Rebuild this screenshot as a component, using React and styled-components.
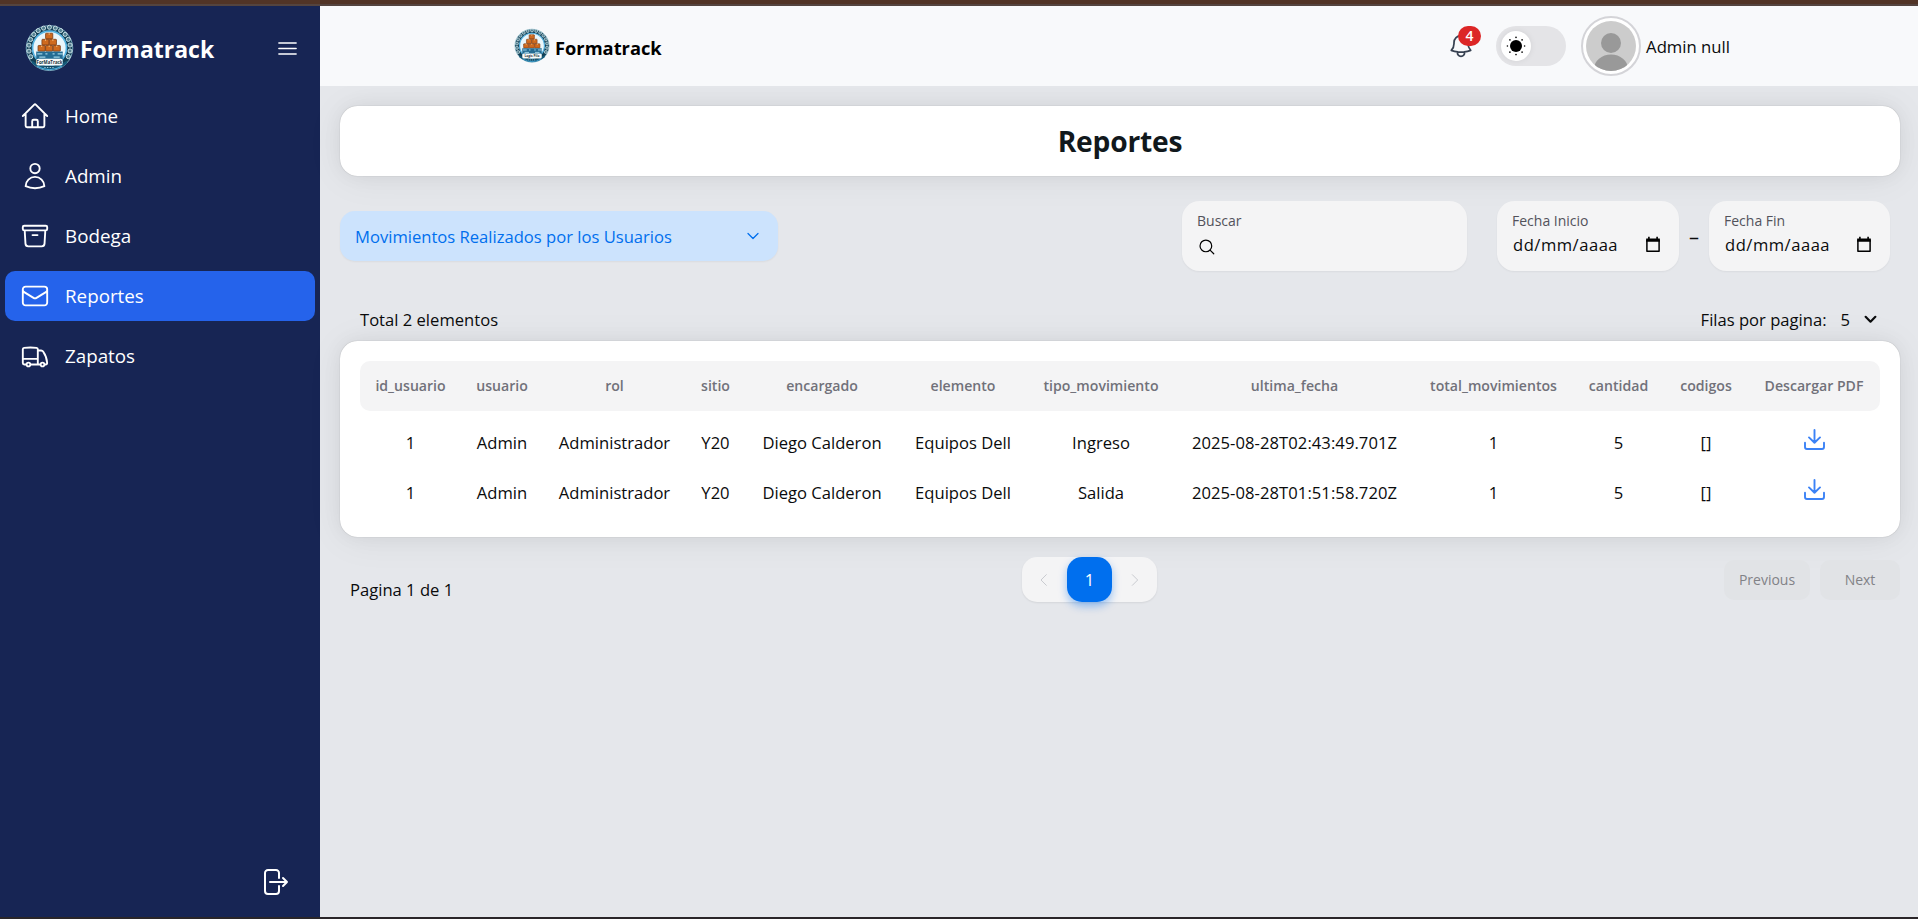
import React from "react";
import styled, { createGlobalStyle, css } from "styled-components";
import {
  HiOutlineHome,
  HiOutlineUser,
  HiOutlineArchiveBox,
  HiOutlineEnvelope,
  HiOutlineTruck,
  HiOutlineBars3,
  HiOutlineBell,
  HiOutlineArrowRightOnRectangle,
} from "react-icons/hi2";

const Global = createGlobalStyle`
  *, *::before, *::after { box-sizing: border-box; }
  body {
    margin: 0;
    font-family: "Open Sans", "Noto Sans", sans-serif;
    font-size: 16.6px;
    line-height: 25px;
    color: #0a0b0c;
    background: #e5e7eb;
  }
  h1, p { margin: 0; }
  svg { display: block; flex: none; }
`;

const Screen = styled.div`
  display: flex;
  flex-direction: column;
  height: 919px;
  overflow: hidden;
  border-top: 4px solid #513426;
  border-bottom: 2px solid #2a2629;
`;
const Edge = styled.div`
  height: 2px;
  flex: none;
  background: #54443f;
`;
const Shell = styled.div`
  display: flex;
  flex: 1;
  min-height: 0;
`;

const Sidebar = styled.aside`
  width: 320px;
  flex: none;
  display: flex;
  flex-direction: column;
  background: #172554;
  color: #fff;
`;
const Brand = styled.div`
  display: flex;
  align-items: center;
  height: 85px;
  padding: 0 20px 0 25px;
`;
const BrandName = styled.span`
  font-weight: 700;
  font-size: ${(p) => p.$size}px;
  color: ${(p) => p.$color};
  margin-left: ${(p) => p.$gap}px;
  padding-top: 2px;
`;
const MenuButton = styled.span`
  margin-left: auto;
`;
const Nav = styled.nav`
  display: flex;
  flex-direction: column;
  gap: 10px;
  padding: 0 5px;
`;
const NavItem = styled.a`
  display: flex;
  align-items: center;
  gap: 15px;
  height: 50px;
  padding: 0 15px;
  border-radius: 10px;
  font-size: 18.8px;
  font-weight: 500;
  background: ${(p) => (p.$active ? "#2563eb" : "transparent")};
  span { padding-top: 1px; }
`;
const Logout = styled.div`
  margin-top: auto;
  display: flex;
  justify-content: flex-end;
  padding: 0 30px 19px 0;
`;

const Main = styled.div`
  flex: 1;
  min-width: 0;
  display: flex;
  flex-direction: column;
`;
const Topbar = styled.header`
  position: relative;
  z-index: 1;
  display: flex;
  align-items: center;
  justify-content: space-between;
  flex: none;
  height: 80px;
  padding: 0 188px 0 194px;
  background: #f8f9fb;
`;
const Cluster = styled.div`
  display: flex;
  align-items: center;
`;
const BellWrap = styled.div`
  position: relative;
  color: #374151;
  margin-right: 21px;
`;
const Badge = styled.span`
  position: absolute;
  left: 11px;
  top: -6px;
  width: 23px;
  height: 20px;
  border-radius: 10px;
  background: #dc2626;
  color: #fff;
  font-size: 14px;
  font-weight: 600;
  line-height: 20px;
  text-align: center;
`;
const Switch = styled.div`
  width: 70px;
  height: 40px;
  padding: 5px;
  border-radius: 20px;
  background: #e4e4e7;
`;
const Thumb = styled.div`
  width: 30px;
  height: 30px;
  border-radius: 50%;
  background: #fff;
  display: grid;
  place-items: center;
  box-shadow: 0 0 6px rgba(0, 0, 0, 0.08);
`;
const Avatar = styled.div`
  width: 60px;
  height: 60px;
  margin: 0 5px 0 15px;
  padding: 3px;
  border: 2px solid #d4d4d8;
  border-radius: 50%;
  background: #fff;
`;
const UserName = styled.span`
  font-size: 16.7px;
  padding-top: 1px;
`;

const Content = styled.main`
  flex: 1;
  padding: 20px 18px 0 20px;
`;
const cardShadow = css`
  box-shadow: 0 0 19px rgba(0, 0, 0, 0.05), 0 2.5px 38px rgba(0, 0, 0, 0.06),
    0 0 1px rgba(0, 0, 0, 0.3);
`;
const TitleCard = styled.section`
  display: grid;
  place-items: center;
  height: 70px;
  border-radius: 17.5px;
  background: #fff;
  ${cardShadow}
`;
const Title = styled.h1`
  font-size: 28.2px;
  line-height: 40px;
  font-weight: 700;
  letter-spacing: -0.2px;
  color: #11181c;
`;
const Filters = styled.div`
  display: flex;
  align-items: center;
  height: 70px;
  margin-top: 25px;
  padding-right: 10px;
`;
const ReportSelect = styled.div`
  display: flex;
  align-items: center;
  justify-content: space-between;
  width: 438px;
  height: 50px;
  margin-right: auto;
  padding: 0 15px;
  border-radius: 15px;
  background: #cce3fd;
  color: #006fee;
  box-shadow: 0 1px 2px rgba(0, 0, 0, 0.05);
`;
const Field = styled.label`
  display: flex;
  flex-direction: column;
  width: ${(p) => p.$w}px;
  height: 70px;
  padding: 9px 15px;
  border-radius: 17.5px;
  background: #f4f4f5;
  box-shadow: 0 1px 2px rgba(0, 0, 0, 0.05);
`;
const FieldLabel = styled.span`
  font-size: 14px;
  line-height: 21px;
  color: #52525b;
`;
const FieldValue = styled.span`
  display: flex;
  align-items: center;
  justify-content: space-between;
  height: 27px;
  padding: 0 3px 0 1px;
  letter-spacing: 0.5px;
`;
const SearchValue = styled(FieldValue)`
  height: 34px;
`;
const Dash = styled.span`
  width: 30px;
  text-align: center;
  font-size: 20px;
`;
const Gap = styled.span`
  width: 30px;
`;
const Summary = styled.div`
  display: flex;
  justify-content: space-between;
  align-items: center;
  height: 25px;
  margin: 36px 23px 9px 20px;
`;
const RowsPer = styled.div`
  display: flex;
  align-items: center;
  gap: 14px;
`;

const TableCard = styled.section`
  height: 196px;
  padding: 20px;
  border-radius: 17.5px;
  background: #fff;
  ${cardShadow}
`;
const Row = styled.div`
  display: grid;
  grid-template-columns: 101px 82px 143px 59px 154px 128px 148px 239px 159px 91px 84px 1fr;
  align-items: center;
  justify-items: center;
  height: 50px;
  white-space: nowrap;
`;
const HeadRow = styled(Row)`
  border-radius: 10px;
  background: #f4f4f5;
  color: #71717a;
  font-size: 14.1px;
  font-weight: 600;
  margin-bottom: 7px;
`;
const Cell = styled.span`
  padding-bottom: 1px;
`;
const DateCell = styled(Cell)`
  letter-spacing: 0.06px;
`;
const DownloadCell = styled.span`
  color: #3b82f6;
  padding-bottom: 7px;
`;

const Footer = styled.footer`
  display: flex;
  justify-content: space-between;
  align-items: flex-start;
  padding-top: 20px;
`;
const PageText = styled.p`
  width: 305px;
  padding: 20px 0 0 10px;
`;
const Pager = styled.div`
  display: flex;
  border-radius: 15px;
  background: #f4f4f5;
  box-shadow: 0 1px 2px rgba(0, 0, 0, 0.08);
`;
const PagerItem = styled.span`
  display: grid;
  place-items: center;
  width: 45px;
  height: 45px;
  border-radius: 15px;
  color: #c9cbd0;
  ${(p) =>
    p.$active &&
    css`
      background: #006fee;
      color: #fff;
      box-shadow: 0 4px 8px rgba(0, 111, 238, 0.4);
    `}
`;
const Buttons = styled.div`
  display: flex;
  justify-content: flex-end;
  gap: 10px;
  width: 366px;
  padding-top: 3px;
`;
const NavButton = styled.span`
  display: grid;
  place-items: center;
  width: ${(p) => p.$w}px;
  height: 40px;
  padding-bottom: 1px;
  border-radius: 10px;
  background: #e1e3e6;
  color: #818286;
  font-size: 14px;
`;

const beads = Array.from({ length: 15 }, (_, i) => {
  const a = ((-205 + i * 16.4) * Math.PI) / 180;
  return [24 + 20.3 * Math.cos(a), 23.5 + 20.3 * Math.sin(a)];
});
const boxes = [[20.2, 9], [16.6, 15], [23.8, 15], [12.8, 21], [20.2, 21], [27.6, 21]];

function Logo({ size, label }) {
  return (
    <svg width={size} height={size} viewBox="0 0 48 48">
      <ellipse cx="24" cy="23.6" rx="22.8" ry="22" fill="#123f55" stroke="#8fc3d4" strokeWidth="0.8" />
      {beads.map(([x, y], i) => (
        <circle key={i} cx={x} cy={y} r="2" fill="#527f90" stroke="#d5e8ec" strokeWidth="0.9" />
      ))}
      <circle cx="24" cy="23.6" r="16.6" fill="#eaf6fb" stroke="#58b4e2" strokeWidth="1.6" />
      {boxes.map(([x, y], i) => (
        <g key={i}>
          <rect x={x} y={y} width="7" height="5.6" rx="0.6" fill="#cf6a1f" stroke="#7c3d17" strokeWidth="0.8" />
          <path d={`M${x + 3.5} ${y}v1.6`} stroke="#f2b26d" strokeWidth="1.1" />
        </g>
      ))}
      <path d="M11 27h26v8h-26z" fill="#246c93" />
      <path d="M12 29.3h5m3 0h2m5 0h2m3 0h5M14 32.5h6m8 0h6" stroke="#9fd3e8" strokeWidth="1.3" />
      <path d="M7 36q17 12 34 0v3q-17 12-34 0z" fill="#155a7a" />
      <rect x="11" y="34" width="26" height="6.6" rx="2" fill="#f8fbfa" />
      <text x="24" y="38.9" textAnchor="middle" fontSize="4.3" fontWeight="700" fill="#18323f" fontFamily="Open Sans, sans-serif">
        {label}
      </text>
      <path d="M19 42.6h10" stroke="#d5e8ec" strokeWidth="0.8" strokeDasharray="1.2 1.4" />
      <path d="M12 41.4q12 7 24 0" fill="none" stroke="#4aaee0" strokeWidth="1" />
    </svg>
  );
}

const Chevron = ({ size, d = "m6 9 6 6 6-6", w = 1.5 }) => (
  <svg width={size} height={size} viewBox="0 0 24 24" fill="none" stroke="currentColor" strokeWidth={w} strokeLinecap="round" strokeLinejoin="round">
    <path d={d} />
  </svg>
);

const Sun = () => (
  <svg width="20" height="20" viewBox="0 0 20 20">
    <circle cx="10" cy="10" r="6" />
    {[0, 45, 90, 135, 180, 225, 270, 315].map((a) => (
      <circle key={a} cx="10" cy="1.4" r="0.8" transform={`rotate(${a} 10 10)`} />
    ))}
  </svg>
);

const Download = () => (
  <svg width="21" height="21" viewBox="0 0 21 21" fill="none" stroke="currentColor" strokeWidth="1.9" strokeLinecap="round" strokeLinejoin="round">
    <path d="M1 13.8v4.2a2 2 0 0 0 2 2h15a2 2 0 0 0 2-2v-4.2M10.5 1v12.8M5 8.4l5.5 5.4L16 8.4" />
  </svg>
);

const Calendar = () => (
  <svg width="16" height="18" viewBox="0 0 16 18">
    <path d="M1.9 4h12.2v11.2H1.9z" fill="none" stroke="#000" strokeWidth="1.5" strokeLinejoin="round" />
    <path d="M1.2 2.4h13.6v3.3H1.2zM3.1 0.8h1.6v3h-1.6zM11.3 0.8h1.6v3h-1.6z" fill="#000" />
  </svg>
);

const nav = [
  ["Home", HiOutlineHome],
  ["Admin", HiOutlineUser],
  ["Bodega", HiOutlineArchiveBox],
  ["Reportes", HiOutlineEnvelope],
  ["Zapatos", HiOutlineTruck],
];
const heads = ["id_usuario", "usuario", "rol", "sitio", "encargado", "elemento", "tipo_movimiento", "ultima_fecha", "total_movimientos", "cantidad", "codigos", "Descargar PDF"];
const dateColumn = heads.indexOf("ultima_fecha");
const rows = [
  ["1", "Admin", "Administrador", "Y20", "Diego Calderon", "Equipos Dell", "Ingreso", "2025-08-28T02:43:49.701Z", "1", "5", "[]"],
  ["1", "Admin", "Administrador", "Y20", "Diego Calderon", "Equipos Dell", "Salida", "2025-08-28T01:51:58.720Z", "1", "5", "[]"],
];

export default function App() {
  return (
    <Screen>
      <Global />
      <Edge />
      <Shell>
        <Sidebar>
          <Brand>
            <Logo size={49} label="ForMaTrack" />
            <BrandName $size={23} $gap={6} $color="#fff">Formatrack</BrandName>
            <MenuButton><HiOutlineBars3 size={25} /></MenuButton>
          </Brand>
          <Nav>
            {nav.map(([name, Icon]) => (
              <NavItem key={name} $active={name === "Reportes"}>
                <Icon size={30} />
                <span>{name}</span>
              </NavItem>
            ))}
          </Nav>
          <Logout><HiOutlineArrowRightOnRectangle size={32} /></Logout>
        </Sidebar>
        <Main>
          <Topbar>
            <Cluster>
              <Logo size={36} label="Logis Pilo" />
              <BrandName $size={18.3} $gap={5} $color="#000">Formatrack</BrandName>
            </Cluster>
            <Cluster>
              <BellWrap>
                <HiOutlineBell size={28} />
                <Badge>4</Badge>
              </BellWrap>
              <Switch><Thumb><Sun /></Thumb></Switch>
              <Avatar>
                <svg width="50" height="50" viewBox="0 0 50 50">
                  <clipPath id="face"><circle cx="25" cy="25" r="25" /></clipPath>
                  <g clipPath="url(#face)">
                    <path d="M0 0h50v50H0z" fill="#ccc" />
                    <circle cx="25" cy="22" r="10" fill="#999" />
                    <ellipse cx="25" cy="48" rx="17" ry="14.5" fill="#999" />
                  </g>
                </svg>
              </Avatar>
              <UserName>Admin null</UserName>
            </Cluster>
          </Topbar>
          <Content>
            <TitleCard><Title>Reportes</Title></TitleCard>
            <Filters>
              <ReportSelect>
                Movimientos Realizados por los Usuarios
                <Chevron size={20} />
              </ReportSelect>
              <Field $w={285}>
                <FieldLabel>Buscar</FieldLabel>
                <SearchValue>
                  <svg width="18" height="18" viewBox="0 0 24 24" fill="none" stroke="#000" strokeWidth="1.6" strokeLinecap="round">
                    <circle cx="10.5" cy="10.5" r="7.8" />
                    <path d="m16.4 16.4 4.6 4.6" />
                  </svg>
                </SearchValue>
              </Field>
              <Gap />
              <Field $w={182}>
                <FieldLabel>Fecha Inicio</FieldLabel>
                <FieldValue>dd/mm/aaaa<Calendar /></FieldValue>
              </Field>
              <Dash>–</Dash>
              <Field $w={181}>
                <FieldLabel>Fecha Fin</FieldLabel>
                <FieldValue>dd/mm/aaaa<Calendar /></FieldValue>
              </Field>
            </Filters>
            <Summary>
              <span>Total 2 elementos</span>
              <RowsPer>
                <span>Filas por pagina:</span>
                <span>5</span>
                <Chevron size={13} w={4} d="m3 7 9 9 9-9" />
              </RowsPer>
            </Summary>
            <TableCard>
              <HeadRow>{heads.map((h) => <Cell key={h}>{h}</Cell>)}</HeadRow>
              {rows.map((r, i) => (
                <Row key={i}>
                  {r.map((c, j) =>
                    j === dateColumn ? <DateCell key={j}>{c}</DateCell> : <Cell key={j}>{c}</Cell>
                  )}
                  <DownloadCell><Download /></DownloadCell>
                </Row>
              ))}
            </TableCard>
            <Footer>
              <PageText>Pagina 1 de 1</PageText>
              <Pager>
                <PagerItem><Chevron size={16} d="m14 4-8 8 8 8" /></PagerItem>
                <PagerItem $active>1</PagerItem>
                <PagerItem><Chevron size={16} d="m8 4 8 8-8 8" /></PagerItem>
              </Pager>
              <Buttons>
                <NavButton $w={86}>Previous</NavButton>
                <NavButton $w={80}>Next</NavButton>
              </Buttons>
            </Footer>
          </Content>
        </Main>
      </Shell>
    </Screen>
  );
}
